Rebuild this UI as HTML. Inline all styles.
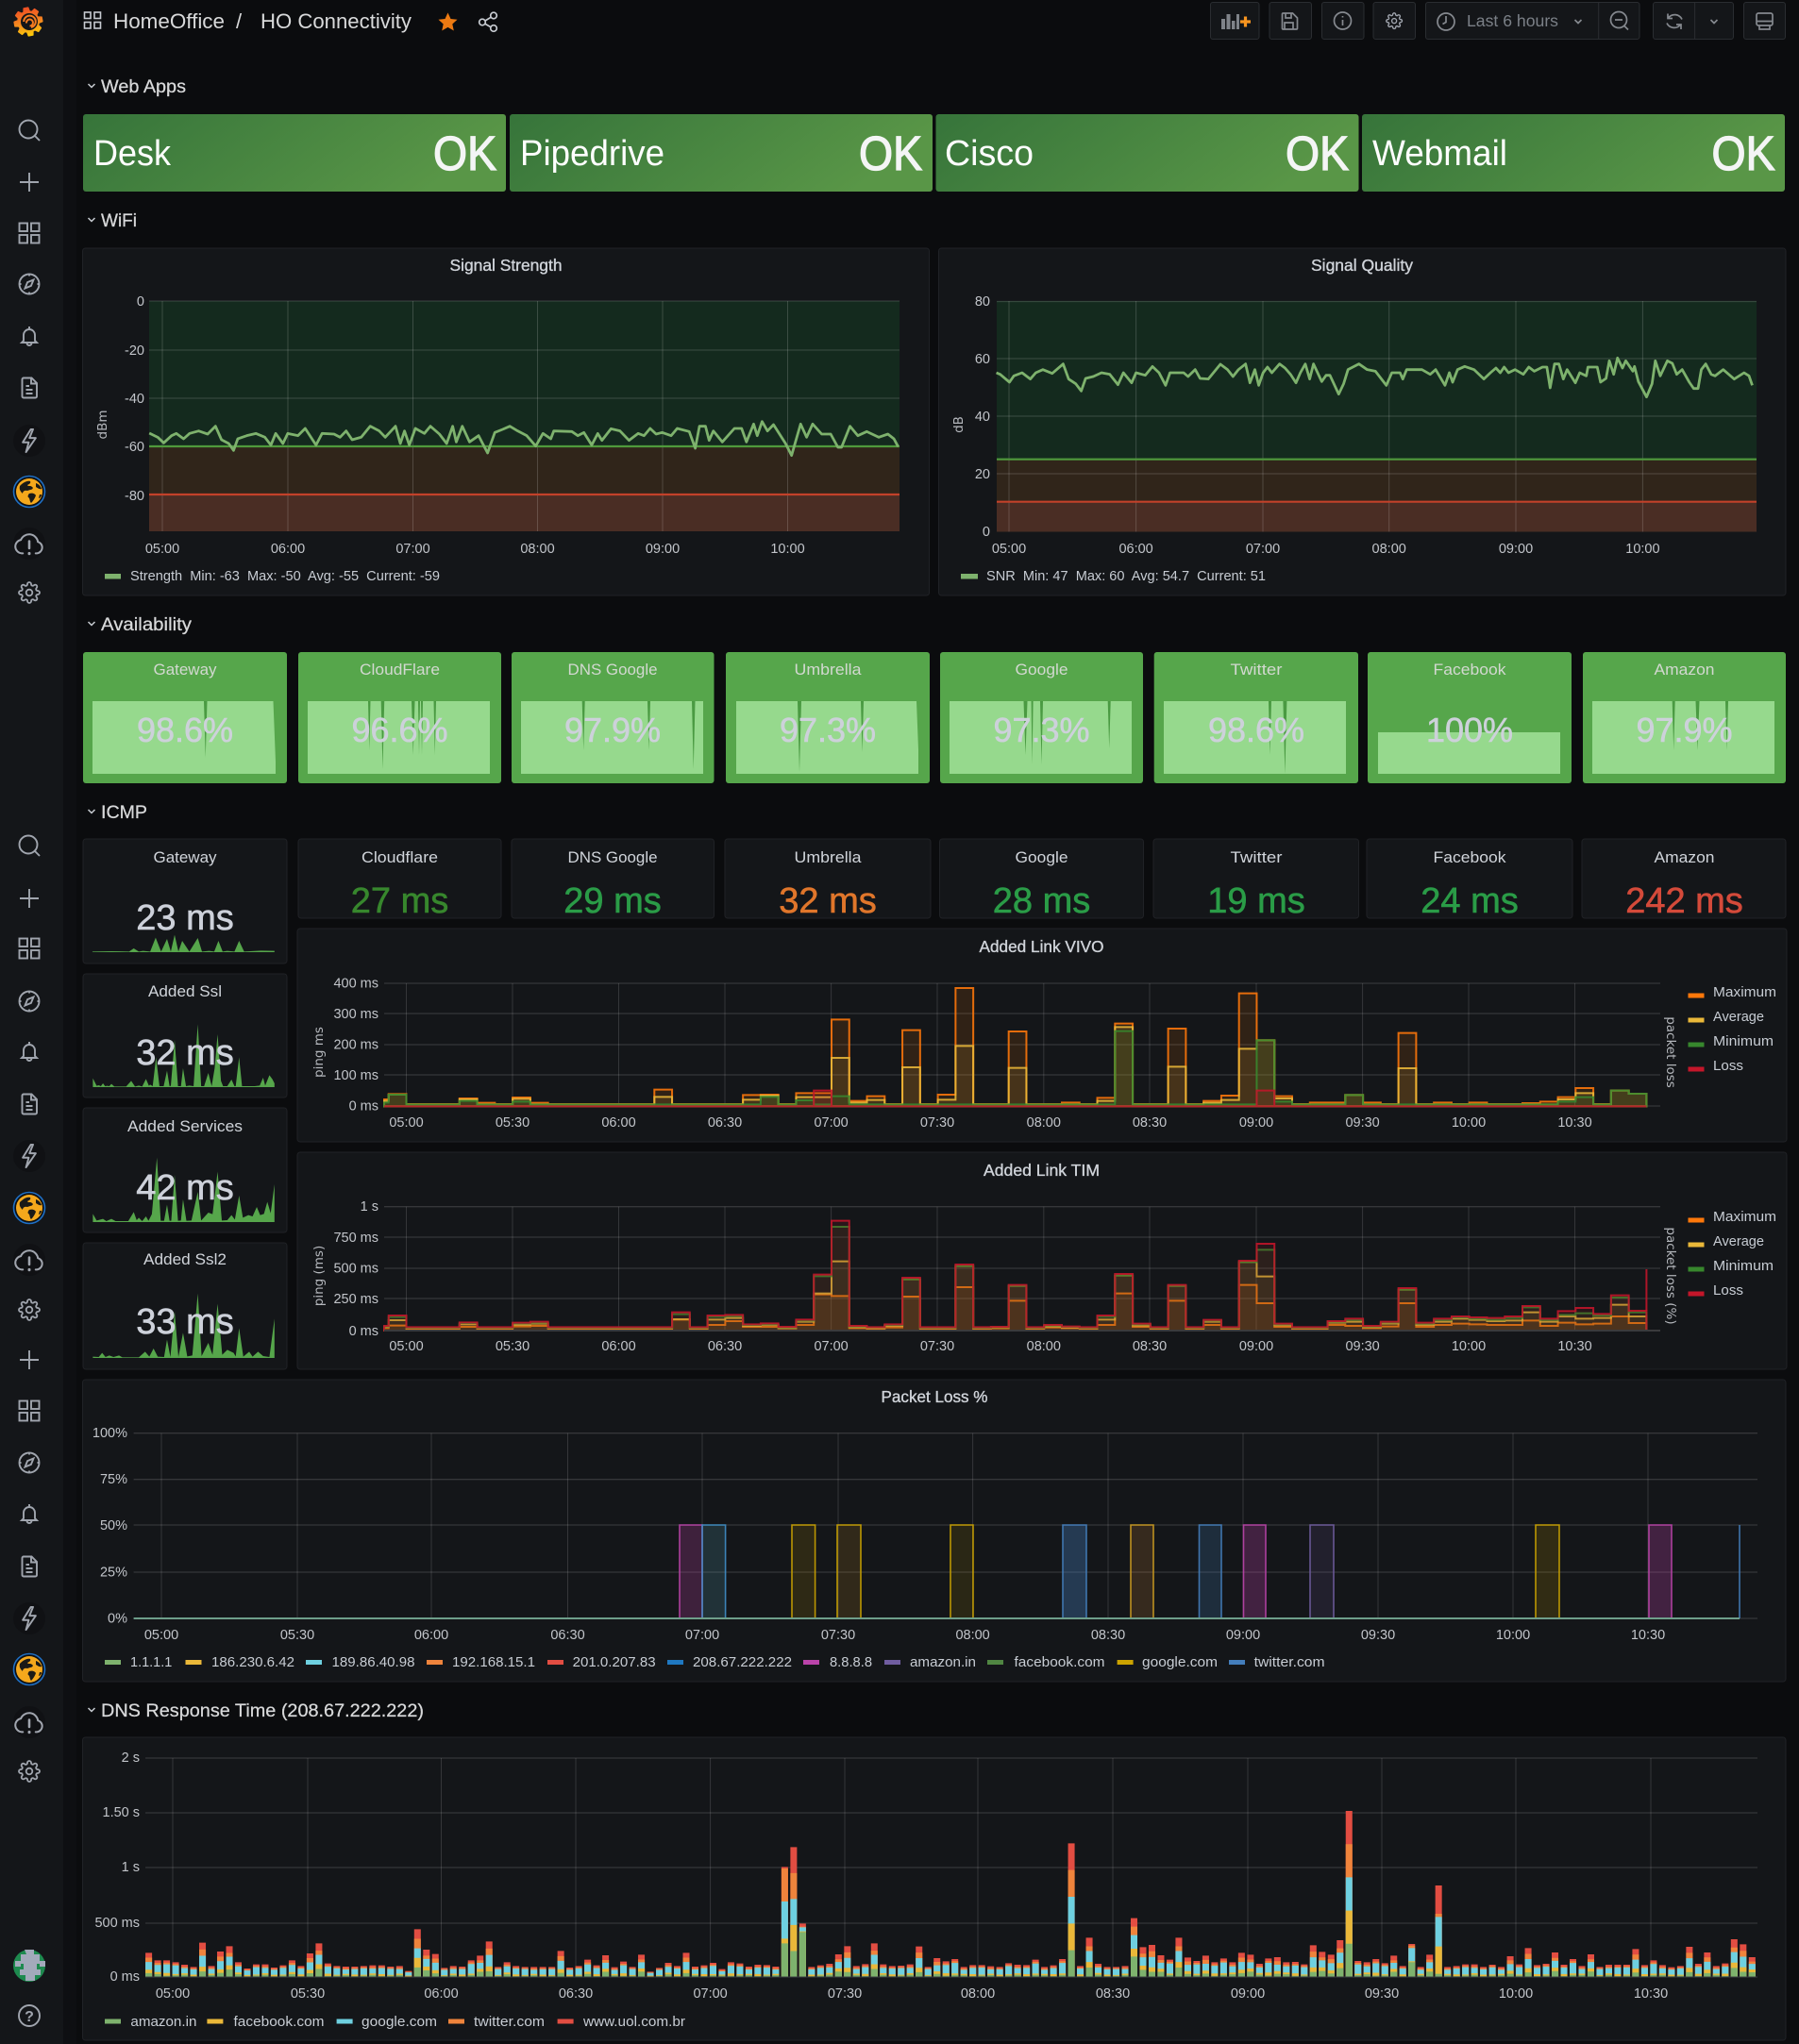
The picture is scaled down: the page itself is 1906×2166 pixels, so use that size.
<!DOCTYPE html>
<html><head><meta charset="utf-8"><title>HO Connectivity</title>
<style>
html,body{margin:0;padding:0;background:#0b0c0e;width:1906px;height:2166px;overflow:hidden}
svg{display:block}
text{font-family:"Liberation Sans",Arial,sans-serif}
.a{font-size:14.5px;fill:#c2c5ca}
.m{text-anchor:middle}
.e{text-anchor:end}
.l{font-size:14.5px;fill:#c7ccd3}
.t{font-size:17.5px;fill:#d0d4da;text-anchor:middle;stroke:#d0d4da;stroke-width:.35}
.s{font-size:19px;fill:#d8d9da;stroke:#d8d9da;stroke-width:.25}
.n{font-size:38px;fill:#fff}
.ok{font-size:51px;fill:#f4f5f5;stroke:#f4f5f5;stroke-width:1.3}
.v{font-size:38px;text-anchor:middle;stroke-width:.6}
.r{font-family:"DejaVu Sans",sans-serif;font-size:13.5px;fill:#b4b7bc;text-anchor:middle}
.p{fill:#141619;stroke:#202226;stroke-width:1}
.b{fill:#141619;stroke:#2a2d31;stroke-width:1}
.st{vector-effect:non-scaling-stroke;stroke-width:2;stroke-opacity:.88}
.gh{fill:none;stroke:rgba(255,255,255,.14);stroke-width:1.3}
.gv{fill:none;stroke:rgba(255,255,255,.14);stroke-width:1}
.tr{fill:none;stroke:#7eb26d;stroke-width:2.8;stroke-linejoin:round;vector-effect:non-scaling-stroke}
.spk{fill:#56a64b}
.bar{fill:none;stroke-width:.736}
</style></head>
<body>
<svg xmlns="http://www.w3.org/2000/svg" width="1906" height="2166" viewBox="0 0 1906 2166">
<defs>
<linearGradient id="ga" x1="0" y1="0" x2="1" y2=".25"><stop offset="0" stop-color="#36743a"/><stop offset="1" stop-color="#599647"/></linearGradient>
<linearGradient id="gl" x1="0" y1="0" x2="0" y2="1"><stop offset="0" stop-color="#ee4f24"/><stop offset=".55" stop-color="#f58a1f"/><stop offset="1" stop-color="#fbca0a"/></linearGradient>
<g id="i-search" fill="none" stroke="#a0a5ae" stroke-width="1.9"><circle cx="11" cy="11" r="9.5"/><path d="M18 18l5 5"/></g>
<g id="i-plus" fill="none" stroke="#a0a5ae" stroke-width="1.9"><path d="M12 2v20M2 12h20"/></g>
<g id="i-grid" fill="none" stroke="#a0a5ae" stroke-width="1.9"><rect x="1.5" y="1.5" width="8.5" height="8.5"/><rect x="14" y="1.5" width="8.5" height="8.5"/><rect x="1.5" y="14" width="8.5" height="8.5"/><rect x="14" y="14" width="8.5" height="8.5"/></g>
<g id="i-compass" fill="none" stroke="#a0a5ae" stroke-width="1.9"><circle cx="12" cy="12" r="10.5"/><path d="M16.5 7.5l-2.6 6.4-6.4 2.6 2.6-6.4z"/><path d="M12 1.5v2M12 20.5v2M1.5 12h2M20.5 12h2"/></g>
<g id="i-bell" fill="none" stroke="#a0a5ae" stroke-width="1.9"><path d="M6 17v-6a6 6 0 0 1 12 0v6l2 2H4z"/><path d="M12 2v3M9.5 19.5a2.5 2.5 0 0 0 5 0"/></g>
<g id="i-doc" fill="none" stroke="#a0a5ae" stroke-width="1.9"><path d="M6 1.5h8.5l5.5 5.5v14a1.5 1.5 0 0 1-1.5 1.5h-12.5a1.5 1.5 0 0 1-1.5-1.5v-18a1.500 1.500 0 0 1 1.5-1.5z"/><path d="M14 2v5.500h5.500M8.500 10h3.500M8.500 14h7M8.500 18h7"/></g>
<g id="i-bolt" fill="none" stroke="#a0a5ae" stroke-width="1.7" stroke-linejoin="round"><path d="M13.500 1.500L6 13.500h5.500L9 22.500l9-13h-5.800L15.500 1.500z"/></g>
<g id="i-cloud" fill="none" stroke="#a0a5ae" stroke-width="1.500" stroke-linecap="round"><path d="M7 19.500H6a5.300 5.300 0 0 1-.6-10.500A7 7 0 0 1 18.800 10.500a4.600 4.600 0 0 1-.8 9h-1"/><path d="M12 10v5.500" stroke-width="1.900"/><path d="M12 19.500v.3" stroke-width="2.200"/></g>
<g id="i-gear" fill="none" stroke="#a0a5ae" stroke-width="1.800"><circle cx="12" cy="12" r="3.300"/><path d="M19.400 15a1.650 1.650 0 0 0 .33 1.820l.06.06a2 2 0 0 1 0 2.830 2 2 0 0 1-2.830 0l-.06-.06a1.650 1.650 0 0 0-1.820-.33 1.650 1.650 0 0 0-1 1.510V21a2 2 0 0 1-2 2 2 2 0 0 1-2-2v-.09A1.650 1.650 0 0 0 9 19.400a1.650 1.650 0 0 0-1.820.33l-.06.06a2 2 0 0 1-2.830 0 2 2 0 0 1 0-2.830l.06-.06a1.650 1.650 0 0 0 .33-1.820 1.650 1.650 0 0 0-1.510-1H3a2 2 0 0 1-2-2 2 2 0 0 1 2-2h.09A1.650 1.650 0 0 0 4.600 9a1.650 1.650 0 0 0-.33-1.820l-.06-.06a2 2 0 0 1 0-2.830 2 2 0 0 1 2.830 0l.06.06a1.650 1.650 0 0 0 1.820.33H9a1.650 1.650 0 0 0 1-1.510V3a2 2 0 0 1 2-2 2 2 0 0 1 2 2v.09a1.650 1.650 0 0 0 1 1.510 1.650 1.650 0 0 0 1.820-.33l.06-.06a2 2 0 0 1 2.830 0 2 2 0 0 1 0 2.830l-.06.06a1.650 1.650 0 0 0-.33 1.820V9a1.650 1.650 0 0 0 1.510 1H21a2 2 0 0 1 2 2 2 2 0 0 1-2 2h-.09a1.650 1.650 0 0 0-1.510 1z"/></g>
<g id="i-globe"><circle cx="12" cy="12" r="16.500" fill="#0d1014" stroke="#1f6fc4" stroke-width="1.600"/><circle cx="12" cy="12" r="14" fill="#f5a81c"/><path d="M2 6c3-3 7-6 11-5 1 2-1 3-3 4 1 2 3 0 5 2 2 1 0 3-2 3l-3 1c-3-1-5 1-5 3-2-2-4-4-3-8z" fill="#1b1a17"/><path d="M12 14c3-1 6 0 7 2-1 3-3 6-5 8-2-2-1-5-3-6-1-1 0-3 1-4z" fill="#1b1a17"/><path d="M19 3c3 1 5 3 6 6-2 1-4-1-6-2z" fill="#1b1a17"/><path d="M23 15c1 0 2 0 2 1-1 2-2 3-3 3z" fill="#1b1a17"/></g>
<!-- dns bar groups: x = bar index, y = height in zoom units -->
<path id="ds0" d="M3 0V-47M12 0V-40M15 0V-37M21 0V-35M24 0V-35M27 0V-33M33 0V-29M36 0V-53M39 0V-32M42 0V-32M45 0V-32M48 0V-35M54 0V-32M57 0V-29M63 0V-45M66 0V-43M69 0V-38M75 0V-37M84 0V-36M87 0V-32M90 0V-57M93 0V-38M96 0V-44M99 0V-55M102 0V-57M108 0V-32M114 0V-55M117 0V-51M120 0V-59M129 0V-40M135 0V-51M138 0V-44M147 0V-40M150 0V-39M153 0V-40M156 0V-42M159 0V-57M162 0V-32M165 0V-39M168 0V-53M171 0V-35"/>
<path id="ds1" d="M1 0V-53M4 0V-39M7 0V-35M10 0V-47M13 0V-40M16 0V-53M22 0V-33M25 0V-37M28 0V-35M34 0V-35M40 0V-47M43 0V-32M49 0V-55M52 0V-31M58 0V-45M61 0V-33M64 0V-25M67 0V-33M70 0V-33M76 0V-42M79 0V-35M82 0V-40M85 0V-40M91 0V-32M94 0V-34M97 0V-39M100 0V-32M106 0V-42M109 0V-35M121 0V-47M124 0V-42M127 0V-47M136 0V-47M142 0V-32M145 0V-32M148 0V-40M151 0V-32M160 0V-35M163 0V-39M169 0V-38M175 0V-35"/>
<path id="ds2" d="M2 0V-53M5 0V-32M11 0V-27M14 0V-30M17 0V-35M20 0V-43M23 0V-33M26 0V-37M29 0V-19M35 0V-33M41 0V-35M44 0V-32M47 0V-30M50 0V-37M53 0V-49M56 0V-17M59 0V-35M62 0V-37M65 0V-47M68 0V-39M74 0V-32M80 0V-41M83 0V-35M89 0V-50M92 0V-38M95 0V-32M98 0V-38M101 0V-37M104 0V-35M107 0V-32M119 0V-47M125 0V-59M128 0V-48M137 0V-57M140 0V-35M146 0V-35M149 0V-32M155 0V-38M158 0V-39M164 0V-39M167 0V-38M170 0V-31M173 0V-42M176 0V-43"/>
<path id="dm0" d="M0 0V-77M6 0V-109M8 0V-81M18 0V-75M32 0V-73M38 0V-113M46 0V-83M60 0V-77M78 0V-98M86 0V-97M88 0V-60M112 0V-102M116 0V-62M118 0V-68M122 0V-77M126 0V-63M130 0V-101M132 0V-71M152 0V-66M154 0V-92M166 0V-89M172 0V-96M174 0V-78M178 0V-104"/>
<path id="dm1" d="M9 0V-98M19 0V-107M31 0V-87M37 0V-68M51 0V-69M55 0V-71M77 0V-72M81 0V-107M105 0V-125M111 0V-95M113 0V-69M115 0V-125M123 0V-71M131 0V-80M133 0V-117M139 0V-68M143 0V-71M157 0V-78M161 0V-72M177 0V-120M179 0V-63"/>
<path id="dt" d="M30 0V-152M72 0V-413M103 0V-425M134 0V-528"/>
</defs>

<rect width="1906" height="2166" fill="#0b0c0e"/>
<rect width="67" height="2166" fill="#141619"/>
<rect x="67" width="14" height="2166" fill="#0e0f12"/>

<!-- sidebar -->
<g>
<circle cx="31" cy="467" r="17" fill="#101114"/><circle cx="31" cy="576" r="17" fill="#101114"/><circle cx="31" cy="1225" r="17" fill="#101114"/><circle cx="31" cy="1335" r="17" fill="#101114"/><circle cx="31" cy="1715" r="17" fill="#101114"/><circle cx="31" cy="1825" r="17" fill="#101114"/>
<use href="#i-search" transform="translate(19 126)"/><use href="#i-plus" transform="translate(19 181)"/><use href="#i-grid" transform="translate(19 235)"/><use href="#i-compass" transform="translate(19 289)"/><use href="#i-bell" transform="translate(19 344)"/><use href="#i-doc" transform="translate(19 399)"/><use href="#i-bolt" transform="translate(17.200 453.200) scale(1.15)"/><use href="#i-globe" transform="translate(19 509)"/><use href="#i-cloud" transform="translate(14.800 560) scale(1.35)"/><use href="#i-gear" transform="translate(19 616)"/>
<use href="#i-search" transform="translate(19 884)"/><use href="#i-plus" transform="translate(19 940)"/><use href="#i-grid" transform="translate(19 993)"/><use href="#i-compass" transform="translate(19 1049)"/><use href="#i-bell" transform="translate(19 1102)"/><use href="#i-doc" transform="translate(19 1158)"/><use href="#i-bolt" transform="translate(17.200 1211.200) scale(1.15)"/><use href="#i-globe" transform="translate(19 1268)"/><use href="#i-cloud" transform="translate(14.800 1319) scale(1.35)"/><use href="#i-gear" transform="translate(19 1376)"/>
<use href="#i-plus" transform="translate(19 1429)"/><use href="#i-grid" transform="translate(19 1483)"/><use href="#i-compass" transform="translate(19 1538)"/><use href="#i-bell" transform="translate(19 1592)"/><use href="#i-doc" transform="translate(19 1648)"/><use href="#i-bolt" transform="translate(17.200 1701.200) scale(1.15)"/><use href="#i-globe" transform="translate(19 1757)"/><use href="#i-cloud" transform="translate(14.800 1809) scale(1.35)"/><use href="#i-gear" transform="translate(19 1865)"/>
</g>

<!-- logo -->
<g transform="translate(30 23) rotate(-10) scale(.93)">
<path fill="url(#gl)" stroke="url(#gl)" stroke-width="1.600" stroke-linejoin="round" d="M-3.3-11.500L-2.500-15.800L2.500-15.800L3.300-11.500L5.800-10.460L9.400-12.940L12.940-9.400L10.460-5.800L11.500-3.300L15.800-2.500L15.800 2.500L11.500 3.300L10.460 5.800L12.940 9.400L9.400 12.940L5.800 10.460L3.300 11.500L2.500 15.800L-2.500 15.800L-3.300 11.500L-5.800 10.460L-9.400 12.940L-12.940 9.400L-10.460 5.800L-11.500 3.300L-15.800 2.500L-15.800-2.500L-11.500-3.300L-10.460-5.800L-12.940-9.400L-9.400-12.940L-5.800-10.460Z"/>
</g>
<circle cx="31" cy="23" r="9" fill="#141619"/>
<path d="M28 24.500a3.500 3.500 0 1 1 3.500 3 M33 29a6.300 6.300 0 1 0-7.800-6" fill="none" stroke="#f47b20" stroke-width="2"/>

<!-- top bar left -->
<g fill="none" stroke="#c7cbd1" stroke-width="1.600"><rect x="89.500" y="13" width="6.500" height="6.500"/><rect x="100" y="13" width="6.500" height="6.500"/><rect x="89.500" y="23.500" width="6.500" height="6.500"/><rect x="100" y="23.500" width="6.500" height="6.500"/></g>
<text x="120" y="30" font-size="22" fill="#d8d9da" textLength="118" lengthAdjust="spacingAndGlyphs">HomeOffice</text>
<text x="250" y="30" font-size="22" fill="#d8d9da">/</text>
<text x="276" y="30" font-size="22" fill="#d8d9da" textLength="160" lengthAdjust="spacingAndGlyphs">HO Connectivity</text>
<path d="M474.500 13.500l3 6.500 7 .8-5.200 4.700 1.500 7-6.300-3.600-6.300 3.600 1.500-7-5.200-4.700 7-.8z" fill="#ec7a12"/>
<g fill="none" stroke="#c7cbd1" stroke-width="1.700"><circle cx="523" cy="16.500" r="3.300"/><circle cx="511" cy="23.500" r="3.300"/><circle cx="523" cy="30" r="3.300"/><path d="M514 22l6-3.700M514 25.300l6 3.400"/></g>

<!-- top bar buttons -->
<rect class="b" x="1282.500" y="2.500" width="51.500" height="39" rx="2.500"/>
<rect class="b" x="1345" y="2.500" width="44.500" height="39" rx="2.500"/>
<rect class="b" x="1400.500" y="2.500" width="44.500" height="39" rx="2.500"/>
<rect class="b" x="1455" y="2.500" width="44.500" height="39" rx="2.500"/>
<rect class="b" x="1510.500" y="2.500" width="226.500" height="39" rx="2.500"/>
<path d="M1693.700 3v38" stroke="#2a2d31"/>
<rect class="b" x="1751.500" y="2.500" width="85" height="39" rx="2.500"/>
<path d="M1795.600 3v38" stroke="#2a2d31"/>
<rect class="b" x="1847.500" y="2.500" width="44" height="39" rx="2.500"/>
<g fill="#7f8389"><rect x="1294" y="20" width="4" height="11"/><rect x="1299.500" y="15" width="4" height="16"/><rect x="1305" y="22" width="3.500" height="9"/><rect x="1310" y="15" width="3" height="16"/></g>
<path d="M1314 23h11M1319.500 17.500v11" stroke="#f79520" stroke-width="3.200"/>
<g fill="none" stroke="#85898f" stroke-width="1.700">
<path d="M1359.500 14h10l5 5v11a1 1 0 0 1-1 1h-14a1 1 0 0 1-1-1v-15a1 1 0 0 1 1-1z"/><path d="M1362 14v5h6v-5M1361 31v-7h9v7"/>
<circle cx="1422.500" cy="22" r="9"/><path d="M1422.500 21v6M1422.500 17v1.500"/>
<circle cx="1532" cy="23" r="9"/><path d="M1532 17v6.500l-3.500 2"/>
<path d="M1668.500 21l3.500 3.500 3.500-3.500"/>
<circle cx="1715" cy="21" r="8.500"/><path d="M1711 21h8M1721 27.500l4 4"/>
<path d="M1767 14.500v5h5M1781 31v-5h-5M1767.500 19a8.500 8.500 0 0 1 14.500 1.500M1780.500 26a8.500 8.500 0 0 1-14.500-1.500"/>
<path d="M1812.500 21l3.500 3.500 3.500-3.500"/>
<rect x="1861" y="14" width="17" height="13" rx="2"/><path d="M1861 22.500h17M1864 27v4h11v-4"/>
</g>
<use href="#i-gear" transform="translate(1468 13) scale(.76)"/>
<text x="1554" y="28" font-size="17.500" fill="#7b8087" textLength="97" lengthAdjust="spacingAndGlyphs">Last 6 hours</text>

<!-- section chevrons -->
<g fill="none" stroke="#c7cbd1" stroke-width="1.500"><path d="M93.500 89l3.500 3.500 3.500-3.500"/><path d="M93.500 231l3.500 3.500 3.500-3.500"/><path d="M93.500 659l3.500 3.500 3.500-3.500"/><path d="M93.500 858l3.500 3.500 3.500-3.500"/><path d="M93.500 1810l3.500 3.500 3.500-3.500"/></g>
<text class="s" x="107" y="98" textLength="90" lengthAdjust="spacingAndGlyphs">Web Apps</text>
<text class="s" x="107" y="240" textLength="38" lengthAdjust="spacingAndGlyphs">WiFi</text>
<text class="s" x="107" y="668" textLength="96" lengthAdjust="spacingAndGlyphs">Availability</text>
<text class="s" x="107" y="867" textLength="49" lengthAdjust="spacingAndGlyphs">ICMP</text>
<text class="s" x="107" y="1819" textLength="342" lengthAdjust="spacingAndGlyphs">DNS Response Time (208.67.222.222)</text>

<!-- web apps -->
<rect x="88" y="121" width="448" height="82" rx="3" fill="url(#ga)"/>
<rect x="540" y="121" width="448" height="82" rx="3" fill="url(#ga)"/>
<rect x="991.500" y="121" width="448" height="82" rx="3" fill="url(#ga)"/>
<rect x="1443" y="121" width="448" height="82" rx="3" fill="url(#ga)"/>
<text class="n" x="99" y="175" textLength="82" lengthAdjust="spacingAndGlyphs">Desk</text>
<text class="n" x="551" y="175" textLength="153" lengthAdjust="spacingAndGlyphs">Pipedrive</text>
<text class="n" x="1001" y="175" textLength="94" lengthAdjust="spacingAndGlyphs">Cisco</text>
<text class="n" x="1454" y="175" textLength="143" lengthAdjust="spacingAndGlyphs">Webmail</text>
<text class="ok" x="459" y="180" textLength="67" lengthAdjust="spacingAndGlyphs">OK</text>
<text class="ok" x="910" y="180" textLength="67" lengthAdjust="spacingAndGlyphs">OK</text>
<text class="ok" x="1362" y="180" textLength="67" lengthAdjust="spacingAndGlyphs">OK</text>
<text class="ok" x="1813.500" y="180" textLength="67" lengthAdjust="spacingAndGlyphs">OK</text>

<!-- panels -->
<rect class="p" x="87.500" y="263" width="897" height="368" rx="3"/>
<rect class="p" x="994.500" y="263" width="897.500" height="368" rx="3"/>
<g fill="#56a64b">
<rect x="88" y="691" width="216" height="139" rx="3"/><rect x="316" y="691" width="215" height="139" rx="3"/><rect x="542" y="691" width="214.500" height="139" rx="3"/><rect x="769" y="691" width="216" height="139" rx="3"/><rect x="996" y="691" width="215" height="139" rx="3"/><rect x="1222.700" y="691" width="216.300" height="139" rx="3"/><rect x="1449" y="691" width="216" height="139" rx="3"/><rect x="1677" y="691" width="215" height="139" rx="3"/>
</g>
<g fill="#96d98d">
<rect x="98" y="743" width="194" height="77"/><rect x="326" y="743" width="193" height="77"/><rect x="552" y="743" width="193" height="77"/><rect x="780" y="743" width="193" height="77"/><rect x="1006" y="743" width="193" height="77"/><rect x="1233" y="743" width="193" height="77"/><rect x="1460" y="776" width="193" height="44"/><rect x="1687" y="743" width="193" height="77"/>
</g>
<!-- availability notches -->
<g fill="#4a9a42">
<path d="M216 743h3.500L217.750 803z"/><path d="M390 743h2.500L391.250 795z"/><path d="M403.700 743h3.500L405.450 815z"/><path d="M436 743h3.500L437.750 800z"/><path d="M443 743h2L444 800z"/><path d="M446 743h2L447 800z"/><path d="M459.500 743h2.500L460.750 800z"/><path d="M616.700 743h3L618.200 795z"/><path d="M686 743h3L687.500 795z"/><path d="M733 743h3.500L734.750 815z"/><path d="M845 743h4L847 818z"/><path d="M912 743h3L913.500 797z"/><path d="M1084.500 743h4L1086.500 800z"/><path d="M1092.600 743h2L1093.600 810z"/><path d="M1102 743h3L1103.500 810z"/><path d="M1173.700 743h3L1175.200 793z"/><path d="M1344 743h3L1345.500 800z"/><path d="M1359.400 743h4L1361.400 820z"/><path d="M1771.700 743h3L1773.200 795z"/><path d="M1796.500 743h4L1798.500 795z"/><path d="M1828 743h3L1829.500 795z"/>
</g>
<g fill="#56a64b"><path d="M289.500 743h3v77z"/><path d="M971 743h3v77z"/></g>

<!-- stat and graph panels -->
<rect class="p" x="88" y="889" width="216" height="132" rx="3"/>
<rect class="p" x="316" y="889" width="215" height="84" rx="3"/>
<rect class="p" x="542" y="889" width="214.500" height="84" rx="3"/>
<rect class="p" x="768" y="889" width="218" height="84" rx="3"/>
<rect class="p" x="995.500" y="889" width="216" height="84" rx="3"/>
<rect class="p" x="1222" y="889" width="217.500" height="84" rx="3"/>
<rect class="p" x="1448" y="889" width="218" height="84" rx="3"/>
<rect class="p" x="1676" y="889" width="216" height="84" rx="3"/>
<rect class="p" x="88" y="1032" width="216" height="131" rx="3"/>
<rect class="p" x="88" y="1174" width="216" height="132" rx="3"/>
<rect class="p" x="88" y="1317" width="216" height="134" rx="3"/>
<rect class="p" x="315" y="984" width="1578" height="226" rx="3"/>
<rect class="p" x="315" y="1221" width="1578" height="230" rx="3"/>
<rect class="p" x="87.500" y="1462" width="1804.500" height="320" rx="3"/>
<rect class="p" x="87.500" y="1841" width="1804.500" height="321" rx="3"/>

<!-- signal strength chart -->
<rect x="158" y="319" width="795" height="154" fill="#142a1e"/><rect x="158" y="473" width="795" height="51" fill="#30251a"/><rect x="158" y="524" width="795" height="39" fill="#4a2d24"/>
<path class="gh" d="M158 319H953M158 371H953M158 422H953"/>
<path class="gv" style="stroke:rgba(255,255,255,.17)" d="M172 319V563M305 319V563M437.500 319V563M569.500 319V563M702 319V563M834.500 319V563"/>
<path d="M158 473H953" stroke="#4f9a3c" stroke-width="2.200"/><path d="M158 524H953" stroke="#c2412a" stroke-width="2.200"/>
<polyline class="tr" transform="matrix(.63776 0 0 .33333 0 260)" points="248,597 262,610 272,628 285,605 293,598 305,615 315,598 330,590 345,600 358,575 368,618 380,630 388,652 395,615 410,605 425,598 440,610 450,635 458,598 470,630 478,598 495,605 507,582 525,635 535,598 555,600 565,610 575,590 585,618 600,610 615,575 630,590 640,610 657,575 665,630 672,590 680,635 690,582 705,598 715,575 730,600 742,630 752,575 758,625 768,575 780,625 795,605 810,660 822,595 835,585 847,575 860,590 875,605 890,638 902,598 915,615 920,590 950,592 960,605 970,595 983,635 993,598 1000,620 1015,583 1030,590 1045,620 1060,598 1070,605 1080,582 1090,600 1100,595 1115,605 1125,582 1145,592 1155,645 1162,575 1172,575 1178,620 1185,590 1200,625 1220,582 1232,582 1240,625 1252,568 1258,605 1266,560 1275,590 1285,570 1295,600 1305,630 1315,668 1330,568 1340,610 1350,568 1365,600 1380,600 1392,642 1398,642 1412,575 1425,605 1440,592 1460,610 1475,600 1485,615 1492,640"/>

<!-- signal quality chart -->
<rect x="1056" y="319" width="805" height="167.700" fill="#142a1e"/><rect x="1056" y="486.700" width="805" height="45" fill="#30251a"/><rect x="1056" y="531.700" width="805" height="31.800" fill="#4a2d24"/>
<path class="gh" d="M1056 319.500H1861M1056 380H1861M1056 441H1861M1056 502H1861"/>
<path class="gv" style="stroke:rgba(255,255,255,.17)" d="M1069 319V563.500M1203.600 319V563.500M1338 319V563.500M1471.700 319V563.500M1606 319V563.500M1740.400 319V563.500"/>
<path d="M1056 486.700H1861" stroke="#4f9a3c" stroke-width="2.200"/><path d="M1056 531.700H1861" stroke="#c2412a" stroke-width="2.200"/>
<polyline class="tr" transform="matrix(.58038 0 0 .33333 990 300)" points="113,285 120,290 137,315 145,295 160,285 175,305 185,285 198,275 215,287 235,257 245,305 258,320 268,343 276,303 290,297 305,285 320,290 335,323 345,285 360,317 368,285 385,293 398,265 410,285 422,325 430,285 455,285 463,297 476,275 485,303 500,305 522,258 535,275 545,297 555,275 568,257 576,317 585,275 592,325 600,285 608,267 616,285 630,257 640,270 650,290 660,317 668,285 677,257 685,305 692,257 707,313 715,293 722,293 738,353 747,320 755,275 775,257 790,275 805,280 825,325 835,285 850,285 855,305 862,275 890,275 905,290 915,275 932,325 940,285 946,315 955,275 968,265 985,275 1003,305 1015,285 1025,270 1033,285 1040,267 1048,285 1060,275 1075,290 1085,267 1095,280 1110,267 1118,267 1124,333 1132,257 1140,257 1148,305 1155,275 1170,317 1178,285 1190,295 1193,267 1210,267 1216,315 1226,303 1232,247 1240,290 1247,238 1256,270 1262,247 1275,280 1278,265 1285,313 1300,362 1310,320 1316,247 1325,295 1338,247 1347,255 1355,290 1365,275 1378,315 1386,335 1394,335 1400,275 1408,257 1418,290 1425,295 1440,275 1460,305 1478,285 1487,295 1493,325"/>

<!-- sparklines -->
<path class="spk" transform="matrix(.44643 0 0 .33333 60 1009)" d="M85 0V-2L130-3L172-2L183-12L195-2L205-4L222-2L235-46L248-2L262-42L271-2L280-55L289-2L298-36L315-2L335-45L345-2L362-4L374-2L384-36L394-2L405-4L422-2L433-36L445-2L485-5L517-4V0z"/>
<path class="spk" transform="matrix(.44643 0 0 .33333 60 1152)" d="M86 0V-28L95-4L100-6L105-3L110-12L115-3L120-4L125-3L130-10L137-2L165-2L177-20L186-2L195-5L203-2L212-26L219-4L222-8L228-3L236-95L244-3L254-3L262-52L268-3L271-4L280-150L288-3L295-3L300-60L307-3L315-5L325-3L335-200L343-3L350-3L360-45L368-3L375-60L382-168L390-20L395-3L405-3L415-24L422-3L425-3L433-95L440-3L470-3L482-5L490-30L495-5L505-38L512-25L517-12V0z"/>
<path class="spk" transform="matrix(.44643 0 0 .33333 60 1295)" d="M86 0V-26L95-5L110-10L118-3L130-10L140-3L170-3L183-32L190-6L195-14L203-3L212-18L218-4L226-25L238-205L247-4L255-4L262-55L268-4L272-4L280-150L288-4L295-5L300-72L308-4L320-5L335-96L343-5L360-30L370-25L382-160L392-5L405-6L415-22L423-8L433-84L442-14L455-22L465-18L475-48L483-22L492-26L500-64L508-28L517-120V0z"/>
<path class="spk" transform="matrix(.44643 0 0 .33333 60 1439)" d="M86 0V-4L100-3L108-16L116-3L125-8L135-3L148-8L156-2L195-2L210-20L220-4L230-30L240-4L255-3L262-58L270-3L280-148L289-3L300-80L310-5L322-8L335-205L344-6L360-48L370-10L382-172L393-10L405-26L420-16L425-5L433-95L443-4L457-20L465-4L478-20L490-6L505-3L517-125V0z"/>

<!-- VIVO chart -->
<path class="gh" d="M407 1042H1759M407 1074H1759M407 1107H1759M407 1139H1759M407 1172H1759"/>
<path class="gv" d="M430.500 1042V1172M543 1042V1172M655.500 1042V1172M768 1042V1172M880.600 1042V1172M993 1042V1172M1105.800 1042V1172M1218 1042V1172M1331 1042V1172M1443.600 1042V1172M1556 1042V1172M1668.500 1042V1172"/>
<g transform="matrix(18.77 0 0 .33333 430.500 980)">
<path class="st" fill="#ff780a" fill-opacity=".12" stroke="#ff780a" d="M-1.250 577V555H-1V538H0V570H3V552H4V566H5V570H6V549H7V566H8V570H14V524H15V570H19V541H20V540H21V570H22V535H24V301H25V560H26V545H27V570H28V335H29V570H30V540H31V201H32V570H34V339H35V570H37V565H38V570H39V550H40V314H41V570H43V330H44V570H45V560H46V543H47V218H48V367H49V545H50V570H51V565H53V541H54V565H55V570H56V344H57V570H58V565H59V570H60V565H61V570H63V567H64V562H65V548H66V519H67V570H68V527H69V537H70V577z"/>
<path class="st" fill="#eab839" fill-opacity=".12" stroke="#eab839" d="M-1.250 577V560H-1V540H0V571H3V555H4V571H6V553H7V571H14V547H15V571H19V556H20V543H21V571H22V548H24V423H25V565H26V557H27V571H28V453H29V571H30V556H31V385H32V571H34V455H35V571H39V560H40V325H41V571H43V451H44V571H45V566H46V557H47V394H48V367H49V552H50V571H53V541H54V571H56V456H57V571H65V555H66V535H67V571H68V527H69V537H70V577z"/>
<path class="st" fill="#37872d" fill-opacity=".14" stroke="#37872d" d="M-1.250 577V565H-1V540H0V571H3V560H4V571H6V562H7V571H20V547H21V571H22V558H23V571H24V545H25V571H40V338H41V571H48V367H49V562H50V571H53V541H54V571H65V562H66V548H67V571H68V527H69V537H70V577z"/>
<path class="st" fill="#c4162a" fill-opacity=".14" stroke="#c4162a" d="M-1.250 577H23V527H24V577H48V527H49V577H70z"/>
</g>

<!-- TIM chart -->
<path class="gh" d="M407 1278.700H1759M407 1311H1759M407 1344H1759M407 1376H1759"/>
<path class="gv" d="M430.500 1278.700V1410M543 1278.700V1410M655.500 1278.700V1410M768 1278.700V1410M880.600 1278.700V1410M993 1278.700V1410M1105.800 1278.700V1410M1218 1278.700V1410M1331 1278.700V1410M1443.600 1278.700V1410M1556 1278.700V1410M1668.500 1278.700V1410"/>
<g transform="matrix(18.77 0 0 .33333 430.500 980)">
<path class="st" fill="#ff780a" fill-opacity=".1" stroke="#ff780a" d="M-1.250 1290V1282H-1V1274H0V1284H3V1278H4V1284H6V1277H7V1275H8V1284H15V1255H16V1284H17V1272H18V1260H19V1278H21V1283H22V1272H23V1175H24V1180H25V1282H26V1284H27V1280H28V1182H29V1284H31V1152H32V1284H33V1283H34V1195H35V1284H36V1280H37V1282H38V1284H39V1272H40V1172H41V1278H42V1284H43V1195H44V1284H45V1272H46V1284H47V1145H48V1203H49V1278H50V1284H52V1272H53V1275H54V1282H55V1277H56V1203H57V1278H58V1272H59V1268H60V1270H61V1272H63V1258H64V1275H65V1265H66V1270H67V1268H68V1245H69V1266H70V1290z"/>
<path class="st" fill="#eab839" fill-opacity=".1" stroke="#eab839" d="M-1.250 1290V1278H-1V1257H0V1282H3V1270H4V1282H6V1272H7V1268H8V1282H15V1254H16V1282H17V1255H18V1250H19V1275H20V1272H21V1282H22V1262H23V1172H24V1070H25V1279H26V1282H27V1275H28V1127H29V1282H31V1085H32V1282H33V1280H34V1148H35V1282H36V1277H37V1280H38V1282H39V1255H40V1115H41V1274H42V1282H43V1148H44V1282H45V1262H46V1282H47V1072H48V1118H49V1273H50V1282H52V1265H53V1262H54V1279H55V1268H56V1160H57V1272H58V1262H59V1252H60V1256H61V1260H62V1258H63V1232H64V1262H65V1245H66V1252H67V1250H68V1208H69V1245H70V1290z"/>
<path class="st" fill="#37872d" fill-opacity=".1" stroke="#37872d" d="M-1.250 1290V1277H-1V1247H0V1281H3V1266H4V1281H6V1267H7V1265H8V1281H15V1238H16V1281H17V1246H18V1244H19V1272H20V1270H21V1280H22V1258H23V1117H24V960H25V1277H26V1280H27V1272H28V1127H29V1281H31V1085H32V1281H33V1279H34V1148H35V1281H36V1274H37V1278H38V1281H39V1246H40V1115H41V1270H42V1281H43V1148H44V1281H45V1258H46V1281H47V1072H48V1033H49V1270H50V1281H52V1262H53V1256H54V1277H55V1264H56V1160H57V1268H58V1256H59V1248H60V1252H61V1255H62V1250H63V1216H64V1256H65V1240H66V1235H67V1242H68V1185H69V1232H70V1290z"/>
<path class="st" fill="#c4162a" fill-opacity=".12" stroke="#c4162a" d="M-1.250 1290V1275H-1V1242H0V1279H3V1264H4V1279H6V1265H7V1262H8V1279H15V1232H16V1279H17V1242H18V1240H19V1270H20V1267H21V1278H22V1255H23V1112H24V941H25V1275H26V1279H27V1270H28V1122H29V1279H31V1080H32V1279H33V1278H34V1145H35V1279H36V1272H37V1277H38V1279H39V1242H40V1110H41V1268H42V1279H43V1145H44V1279H45V1256H46V1279H47V1068H48V1014H49V1268H50V1279H52V1260H53V1252H54V1275H55V1262H56V1155H57V1265H58V1252H59V1245H60V1248H61V1250H62V1245H63V1212H64V1252H65V1228H66V1218H67V1237H68V1178H69V1227H70V1290z"/>
<path class="st" fill="none" stroke="#c4162a" d="M70 1227V1095"/>
</g>
<path d="M407 1410H1759" stroke="#3a3a3c" stroke-width="2"/>

<!-- packet loss chart -->
<path class="gh" d="M141.600 1518.700H1862M141.600 1567.700H1862M141.600 1616H1862M141.600 1666H1862M141.600 1715H1862"/>
<path class="gv" d="M171 1518.700V1715M315 1518.700V1715M457 1518.700V1715M601.500 1518.700V1715M744 1518.700V1715M888 1518.700V1715M1030.600 1518.700V1715M1174 1518.700V1715M1317 1518.700V1715M1460 1518.700V1715M1603 1518.700V1715M1746 1518.700V1715"/>
<g stroke-width="1.600" stroke-opacity=".9">
<path d="M720 1715V1616H744V1715" fill="#ba43a9" fill-opacity=".25" stroke="#ba43a9"/>
<path d="M744 1715V1616H768.600V1715" fill="#5fb0c8" fill-opacity=".18" stroke="#3f8fc8"/>
<path d="M839 1715V1616H863.600V1715" fill="#cca300" fill-opacity=".14" stroke="#cca300"/>
<path d="M887 1715V1616H912V1715" fill="#e0a020" fill-opacity=".14" stroke="#cca300"/>
<path d="M1007 1715V1616H1031V1715" fill="#cca300" fill-opacity=".12" stroke="#cca300"/>
<path d="M1126 1715V1616H1151V1715" fill="#447ebc" fill-opacity=".35" stroke="#447ebc"/>
<path d="M1198 1715V1616H1222V1715" fill="#ef943c" fill-opacity=".16" stroke="#cc9b20"/>
<path d="M1270.500 1715V1616H1294V1715" fill="#447ebc" fill-opacity=".22" stroke="#447ebc"/>
<path d="M1317.500 1715V1616H1341V1715" fill="#ba43a9" fill-opacity=".28" stroke="#ba43a9"/>
<path d="M1388 1715V1616H1413V1715" fill="#705da0" fill-opacity=".15" stroke="#705da0"/>
<path d="M1627 1715V1616H1652V1715" fill="#cca300" fill-opacity=".16" stroke="#cca300"/>
<path d="M1747 1715V1616H1771V1715" fill="#ba43a9" fill-opacity=".28" stroke="#ba43a9"/>
<path d="M1843 1616V1715" fill="none" stroke="#447ebc"/>
</g>
<path d="M141.600 1715H1843" stroke="#6e9e8a" stroke-width="2"/>

<!-- DNS chart -->
<path class="gh" d="M154 1863H1862M154 1921H1862M154 1979H1862M154 2038H1862"/>
<path class="gv" d="M183 1863V2095M326 1863V2095M467.500 1863V2095M610 1863V2095M752.600 1863V2095M895 1863V2095M1036 1863V2095M1179 1863V2095M1322 1863V2095M1464 1863V2095M1606 1863V2095M1749 1863V2095"/>
<g class="bar" transform="matrix(9.49 0 0 .33333 157.600 2095)" style="stroke-width:.74">
<!-- small bars -->
<use href="#ds0" stroke="#e24d42"/><use href="#ds0" transform="scale(1 .88)" stroke="#ef843c"/><use href="#ds0" transform="scale(1 .78)" stroke="#6ed0e0"/><use href="#ds0" transform="scale(1 .2)" stroke="#eab839"/><use href="#ds0" transform="scale(1 .12)" stroke="#7eb26d"/>
<use href="#ds1" stroke="#e24d42"/><use href="#ds1" transform="scale(1 .84)" stroke="#ef843c"/><use href="#ds1" transform="scale(1 .72)" stroke="#6ed0e0"/><use href="#ds1" transform="scale(1 .3)" stroke="#eab839"/><use href="#ds1" transform="scale(1 .18)" stroke="#7eb26d"/>
<use href="#ds2" stroke="#e24d42"/><use href="#ds2" transform="scale(1 .86)" stroke="#ef843c"/><use href="#ds2" transform="scale(1 .76)" stroke="#6ed0e0"/><use href="#ds2" transform="scale(1 .24)" stroke="#eab839"/><use href="#ds2" transform="scale(1 .08)" stroke="#7eb26d"/>
<!-- medium bars -->
<use href="#dm0" stroke="#e24d42"/><use href="#dm0" transform="scale(1 .8)" stroke="#ef843c"/><use href="#dm0" transform="scale(1 .62)" stroke="#6ed0e0"/><use href="#dm0" transform="scale(1 .3)" stroke="#eab839"/><use href="#dm0" transform="scale(1 .16)" stroke="#7eb26d"/>
<use href="#dm1" stroke="#e24d42"/><use href="#dm1" transform="scale(1 .78)" stroke="#ef843c"/><use href="#dm1" transform="scale(1 .66)" stroke="#6ed0e0"/><use href="#dm1" transform="scale(1 .38)" stroke="#eab839"/><use href="#dm1" transform="scale(1 .24)" stroke="#7eb26d"/>
<!-- tall bars -->
<use href="#dt" stroke="#e24d42"/><use href="#dt" transform="scale(1 .8)" stroke="#ef843c"/><use href="#dt" transform="scale(1 .6)" stroke="#6ed0e0"/><use href="#dt" transform="scale(1 .4)" stroke="#eab839"/><use href="#dt" transform="scale(1 .2)" stroke="#7eb26d"/>
<!-- individually shaped bars -->
<path d="M71 0V-350" stroke="#e24d42"/><path d="M71 0V-345" stroke="#ef843c"/><path d="M71 0V-240" stroke="#6ed0e0"/><path d="M71 0V-122" stroke="#eab839"/><path d="M71 0V-107" stroke="#7eb26d"/>
<path d="M73 0V-170" stroke="#e24d42"/><path d="M73 0V-160" stroke="#ef843c"/><path d="M73 0V-158" stroke="#6ed0e0"/><path d="M73 0V-145" stroke="#eab839"/><path d="M73 0V-143" stroke="#7eb26d"/>
<path d="M110 0V-187" stroke="#e24d42"/><path d="M110 0V-160" stroke="#ef843c"/><path d="M110 0V-133" stroke="#6ed0e0"/><path d="M110 0V-90" stroke="#eab839"/><path d="M110 0V-65" stroke="#7eb26d"/>
<path d="M141 0V-105" stroke="#e24d42"/><path d="M141 0V-100" stroke="#ef843c"/><path d="M141 0V-92" stroke="#6ed0e0"/><path d="M141 0V-50" stroke="#eab839"/><path d="M141 0V-47" stroke="#7eb26d"/>
<path d="M144 0V-291" stroke="#e24d42"/><path d="M144 0V-201" stroke="#ef843c"/><path d="M144 0V-191" stroke="#6ed0e0"/><path d="M144 0V-97" stroke="#eab839"/><path d="M144 0V-10" stroke="#7eb26d"/>
</g>
<path d="M154 2095H1862" stroke="#3a3d42"/>

<!-- panel titles -->
<text class="t" x="536" y="287" textLength="119" lengthAdjust="spacingAndGlyphs">Signal Strength</text>
<text class="t" x="1443" y="287" textLength="108" lengthAdjust="spacingAndGlyphs">Signal Quality</text>
<text class="t" x="1103.500" y="1009" textLength="132" lengthAdjust="spacingAndGlyphs">Added Link VIVO</text>
<text class="t" x="1103.500" y="1246" textLength="123" lengthAdjust="spacingAndGlyphs">Added Link TIM</text>
<text class="t" x="990" y="1486" textLength="113" lengthAdjust="spacingAndGlyphs">Packet Loss %</text>

<!-- signal strength axes -->
<text x="153" y="324" class="a e">0</text><text x="153" y="376" class="a e">-20</text><text x="153" y="427" class="a e">-40</text><text x="153" y="478" class="a e">-60</text><text x="153" y="530" class="a e">-80</text>
<text class="a m" x="172" y="586">05:00</text><text class="a m" x="305" y="586">06:00</text><text class="a m" x="437.500" y="586">07:00</text><text class="a m" x="569.500" y="586">08:00</text><text class="a m" x="702" y="586">09:00</text><text class="a m" x="834.500" y="586">10:00</text>
<text class="r" transform="translate(113 450) rotate(-90)">dBm</text>
<rect x="111" y="608" width="17" height="5.500" fill="#7eb26d"/>
<text class="l" x="138" y="615" textLength="328" lengthAdjust="spacingAndGlyphs">Strength&#160; Min: -63&#160; Max: -50&#160; Avg: -55&#160; Current: -59</text>

<!-- signal quality axes -->
<text x="1049" y="324" class="a e">80</text><text x="1049" y="385" class="a e">60</text><text x="1049" y="446" class="a e">40</text><text x="1049" y="507" class="a e">20</text><text x="1049" y="568" class="a e">0</text>
<text class="a m" x="1069" y="586">05:00</text><text class="a m" x="1203.600" y="586">06:00</text><text class="a m" x="1338" y="586">07:00</text><text class="a m" x="1471.700" y="586">08:00</text><text class="a m" x="1606" y="586">09:00</text><text class="a m" x="1740.400" y="586">10:00</text>
<text class="r" transform="translate(1020 450) rotate(-90)">dB</text>
<rect x="1018" y="608" width="18" height="5.500" fill="#7eb26d"/>
<text class="l" x="1045" y="615" textLength="296" lengthAdjust="spacingAndGlyphs">SNR&#160; Min: 47&#160; Max: 60&#160; Avg: 54.7&#160; Current: 51</text>

<!-- availability -->
<g fill="#d2d8d0" font-size="17">
<text class="m" x="196" y="715" textLength="67" lengthAdjust="spacingAndGlyphs">Gateway</text><text class="m" x="423.500" y="715" textLength="85" lengthAdjust="spacingAndGlyphs">CloudFlare</text><text class="m" x="649" y="715" textLength="95" lengthAdjust="spacingAndGlyphs">DNS Google</text><text class="m" x="877" y="715" textLength="71" lengthAdjust="spacingAndGlyphs">Umbrella</text><text class="m" x="1103.500" y="715" textLength="56" lengthAdjust="spacingAndGlyphs">Google</text><text class="m" x="1331" y="715" textLength="55" lengthAdjust="spacingAndGlyphs">Twitter</text><text class="m" x="1557" y="715" textLength="77" lengthAdjust="spacingAndGlyphs">Facebook</text><text class="m" x="1784.500" y="715" textLength="64" lengthAdjust="spacingAndGlyphs">Amazon</text>
</g>
<g fill="#cdd1da" stroke="#cdd1da">
<text class="v" style="font-size:36px" x="196" y="786">98.6%</text><text class="v" style="font-size:36px" x="423.500" y="786">96.6%</text><text class="v" style="font-size:36px" x="649" y="786">97.9%</text><text class="v" style="font-size:36px" x="877" y="786">97.3%</text><text class="v" style="font-size:36px" x="1103.500" y="786">97.3%</text><text class="v" style="font-size:36px" x="1331" y="786">98.6%</text><text class="v" style="font-size:36px" x="1557" y="786">100%</text><text class="v" style="font-size:36px" x="1784.500" y="786">97.9%</text>
</g>

<!-- ICMP stats -->
<g font-size="17" fill="#d0d4da">
<text class="m" x="196" y="914" textLength="67" lengthAdjust="spacingAndGlyphs">Gateway</text><text class="m" x="423.500" y="914" textLength="81" lengthAdjust="spacingAndGlyphs">Cloudflare</text><text class="m" x="649" y="914" textLength="95" lengthAdjust="spacingAndGlyphs">DNS Google</text><text class="m" x="877" y="914" textLength="71" lengthAdjust="spacingAndGlyphs">Umbrella</text><text class="m" x="1103.500" y="914" textLength="56" lengthAdjust="spacingAndGlyphs">Google</text><text class="m" x="1331" y="914" textLength="55" lengthAdjust="spacingAndGlyphs">Twitter</text><text class="m" x="1557" y="914" textLength="77" lengthAdjust="spacingAndGlyphs">Facebook</text><text class="m" x="1784.500" y="914" textLength="64" lengthAdjust="spacingAndGlyphs">Amazon</text>
<text class="m" x="196" y="1056" textLength="78" lengthAdjust="spacingAndGlyphs">Added Ssl</text><text class="m" x="196" y="1199" textLength="122" lengthAdjust="spacingAndGlyphs">Added Services</text><text class="m" x="196" y="1340" textLength="88" lengthAdjust="spacingAndGlyphs">Added Ssl2</text>
</g>
<text class="v" x="196" y="985" fill="#cdd1da" stroke="#cdd1da">23 ms</text>
<text class="v" x="196" y="1128" fill="#cdd1da" stroke="#cdd1da">32 ms</text>
<text class="v" x="196" y="1271" fill="#cdd1da" stroke="#cdd1da">42 ms</text>
<text class="v" x="196" y="1413" fill="#cdd1da" stroke="#cdd1da">33 ms</text>
<text class="v" x="423.500" y="967" fill="#37872d" stroke="#37872d">27 ms</text>
<text class="v" x="649" y="967" fill="#2a9c47" stroke="#2a9c47">29 ms</text>
<text class="v" x="877" y="967" fill="#e0762b" stroke="#e0762b">32 ms</text>
<text class="v" x="1103.500" y="967" fill="#2a9c47" stroke="#2a9c47">28 ms</text>
<text class="v" x="1331" y="967" fill="#2a9c47" stroke="#2a9c47">19 ms</text>
<text class="v" x="1557" y="967" fill="#2a9c47" stroke="#2a9c47">24 ms</text>
<text class="v" x="1784.500" y="967" fill="#d44a3a" stroke="#d44a3a">242 ms</text>

<!-- VIVO axes -->
<text class="a e" x="401" y="1046.500">400 ms</text><text class="a e" x="401" y="1079">300 ms</text><text class="a e" x="401" y="1111.500">200 ms</text><text class="a e" x="401" y="1144">100 ms</text><text class="a e" x="401" y="1176.500">0 ms</text>
<text class="a m" x="430.500" y="1194">05:00</text><text class="a m" x="543" y="1194">05:30</text><text class="a m" x="655.500" y="1194">06:00</text><text class="a m" x="768" y="1194">06:30</text><text class="a m" x="880.600" y="1194">07:00</text><text class="a m" x="993" y="1194">07:30</text><text class="a m" x="1105.800" y="1194">08:00</text><text class="a m" x="1218" y="1194">08:30</text><text class="a m" x="1331" y="1194">09:00</text><text class="a m" x="1443.600" y="1194">09:30</text><text class="a m" x="1556" y="1194">10:00</text><text class="a m" x="1668.500" y="1194">10:30</text>
<text class="r" transform="translate(342 1115) rotate(-90)">ping ms</text>
<text class="r" transform="translate(1766 1115) rotate(90)">packet loss</text>
<text class="l" x="1815" y="1056" textLength="67" lengthAdjust="spacingAndGlyphs">Maximum</text><text class="l" x="1815" y="1082" textLength="54" lengthAdjust="spacingAndGlyphs">Average</text><text class="l" x="1815" y="1108" textLength="64" lengthAdjust="spacingAndGlyphs">Minimum</text><text class="l" x="1815" y="1134" textLength="32" lengthAdjust="spacingAndGlyphs">Loss</text>
<rect x="1788.500" y="1052.500" width="17" height="5" fill="#ff780a"/><rect x="1788.500" y="1078.500" width="17" height="5" fill="#eab839"/><rect x="1788.500" y="1104.500" width="17" height="5" fill="#37872d"/><rect x="1788.500" y="1130.500" width="17" height="5" fill="#c4162a"/>

<!-- TIM axes -->
<text class="a e" x="401" y="1283">1 s</text><text class="a e" x="401" y="1316">750 ms</text><text class="a e" x="401" y="1348.500">500 ms</text><text class="a e" x="401" y="1381">250 ms</text><text class="a e" x="401" y="1415">0 ms</text>
<text class="a m" x="430.500" y="1431">05:00</text><text class="a m" x="543" y="1431">05:30</text><text class="a m" x="655.500" y="1431">06:00</text><text class="a m" x="768" y="1431">06:30</text><text class="a m" x="880.600" y="1431">07:00</text><text class="a m" x="993" y="1431">07:30</text><text class="a m" x="1105.800" y="1431">08:00</text><text class="a m" x="1218" y="1431">08:30</text><text class="a m" x="1331" y="1431">09:00</text><text class="a m" x="1443.600" y="1431">09:30</text><text class="a m" x="1556" y="1431">10:00</text><text class="a m" x="1668.500" y="1431">10:30</text>
<text class="r" transform="translate(342 1352) rotate(-90)">ping (ms)</text>
<text class="r" transform="translate(1766 1352) rotate(90)">packet loss (%)</text>
<text class="l" x="1815" y="1294" textLength="67" lengthAdjust="spacingAndGlyphs">Maximum</text><text class="l" x="1815" y="1320" textLength="54" lengthAdjust="spacingAndGlyphs">Average</text><text class="l" x="1815" y="1346" textLength="64" lengthAdjust="spacingAndGlyphs">Minimum</text><text class="l" x="1815" y="1372" textLength="32" lengthAdjust="spacingAndGlyphs">Loss</text>
<rect x="1788.500" y="1290.500" width="17" height="5" fill="#ff780a"/><rect x="1788.500" y="1316.500" width="17" height="5" fill="#eab839"/><rect x="1788.500" y="1342.500" width="17" height="5" fill="#37872d"/><rect x="1788.500" y="1368.500" width="17" height="5" fill="#c4162a"/>

<!-- packet loss axes -->
<text class="a e" x="135" y="1523">100%</text><text class="a e" x="135" y="1572">75%</text><text class="a e" x="135" y="1621">50%</text><text class="a e" x="135" y="1670.500">25%</text><text class="a e" x="135" y="1719.500">0%</text>
<text class="a m" x="171" y="1737">05:00</text><text class="a m" x="315" y="1737">05:30</text><text class="a m" x="457" y="1737">06:00</text><text class="a m" x="601.500" y="1737">06:30</text><text class="a m" x="744" y="1737">07:00</text><text class="a m" x="888" y="1737">07:30</text><text class="a m" x="1030.600" y="1737">08:00</text><text class="a m" x="1174" y="1737">08:30</text><text class="a m" x="1317" y="1737">09:00</text><text class="a m" x="1460" y="1737">09:30</text><text class="a m" x="1603" y="1737">10:00</text><text class="a m" x="1746" y="1737">10:30</text>
<g><rect x="111" y="1759" width="17" height="5" fill="#7eb26d"/><rect x="196.500" y="1759" width="17" height="5" fill="#eab839"/><rect x="324" y="1759" width="17" height="5" fill="#6ed0e0"/><rect x="452" y="1759" width="17" height="5" fill="#ef843c"/><rect x="580" y="1759" width="17" height="5" fill="#e24d42"/><rect x="707" y="1759" width="17" height="5" fill="#1f78c1"/><rect x="851" y="1759" width="17" height="5" fill="#ba43a9"/><rect x="937" y="1759" width="17" height="5" fill="#705da0"/><rect x="1046" y="1759" width="17" height="5" fill="#508642"/><rect x="1183.600" y="1759" width="17" height="5" fill="#cca300"/><rect x="1302" y="1759" width="17" height="5" fill="#447ebc"/></g>
<text class="l" x="138" y="1766">1.1.1.1</text><text class="l" x="224" y="1766" textLength="88" lengthAdjust="spacingAndGlyphs">186.230.6.42</text><text class="l" x="351.500" y="1766" textLength="88" lengthAdjust="spacingAndGlyphs">189.86.40.98</text><text class="l" x="479" y="1766" textLength="88" lengthAdjust="spacingAndGlyphs">192.168.15.1</text><text class="l" x="606.600" y="1766" textLength="88" lengthAdjust="spacingAndGlyphs">201.0.207.83</text><text class="l" x="734" y="1766" textLength="105" lengthAdjust="spacingAndGlyphs">208.67.222.222</text><text class="l" x="879" y="1766" textLength="45" lengthAdjust="spacingAndGlyphs">8.8.8.8</text><text class="l" x="964" y="1766" textLength="70" lengthAdjust="spacingAndGlyphs">amazon.in</text><text class="l" x="1074.500" y="1766" textLength="96" lengthAdjust="spacingAndGlyphs">facebook.com</text><text class="l" x="1210" y="1766" textLength="80" lengthAdjust="spacingAndGlyphs">google.com</text><text class="l" x="1328.600" y="1766" textLength="75" lengthAdjust="spacingAndGlyphs">twitter.com</text>

<!-- DNS axes -->
<text class="a e" x="148" y="1867">2 s</text><text class="a e" x="148" y="1925">1.50 s</text><text class="a e" x="148" y="1983">1 s</text><text class="a e" x="148" y="2042">500 ms</text><text class="a e" x="148" y="2099">0 ms</text>
<text class="a m" x="183" y="2117">05:00</text><text class="a m" x="326" y="2117">05:30</text><text class="a m" x="467.500" y="2117">06:00</text><text class="a m" x="610" y="2117">06:30</text><text class="a m" x="752.600" y="2117">07:00</text><text class="a m" x="895" y="2117">07:30</text><text class="a m" x="1036" y="2117">08:00</text><text class="a m" x="1179" y="2117">08:30</text><text class="a m" x="1322" y="2117">09:00</text><text class="a m" x="1464" y="2117">09:30</text><text class="a m" x="1606" y="2117">10:00</text><text class="a m" x="1749" y="2117">10:30</text>
<rect x="111" y="2139.500" width="17" height="5" fill="#7eb26d"/><rect x="219.400" y="2139.500" width="17" height="5" fill="#eab839"/><rect x="356.600" y="2139.500" width="17" height="5" fill="#6ed0e0"/><rect x="475" y="2139.500" width="17" height="5" fill="#ef843c"/><rect x="590.600" y="2139.500" width="17" height="5" fill="#e24d42"/>
<text class="l" x="138.400" y="2147" textLength="70" lengthAdjust="spacingAndGlyphs">amazon.in</text><text class="l" x="247.500" y="2147" textLength="96" lengthAdjust="spacingAndGlyphs">facebook.com</text><text class="l" x="383" y="2147" textLength="80" lengthAdjust="spacingAndGlyphs">google.com</text><text class="l" x="502" y="2147" textLength="75" lengthAdjust="spacingAndGlyphs">twitter.com</text><text class="l" x="618" y="2147" textLength="108" lengthAdjust="spacingAndGlyphs">www.uol.com.br</text>

<!-- avatar & help -->
<g transform="translate(31 2083)"><circle r="17" fill="#1e8a4f"/><path d="M-5-17h10v5h6v7h6v6h-6v-3h-3v6h4v6h-6v6h-10v-6h-6v-6h4v-6h-3v3h-6v-6h6v-7h6z" fill="#a3aabb"/></g>
<circle cx="31" cy="2136" r="11" fill="none" stroke="#a0a5ae" stroke-width="1.900"/>
<text x="31" y="2142" text-anchor="middle" font-size="16" font-weight="bold" fill="#a0a5ae">?</text>
</svg>
</body></html>
